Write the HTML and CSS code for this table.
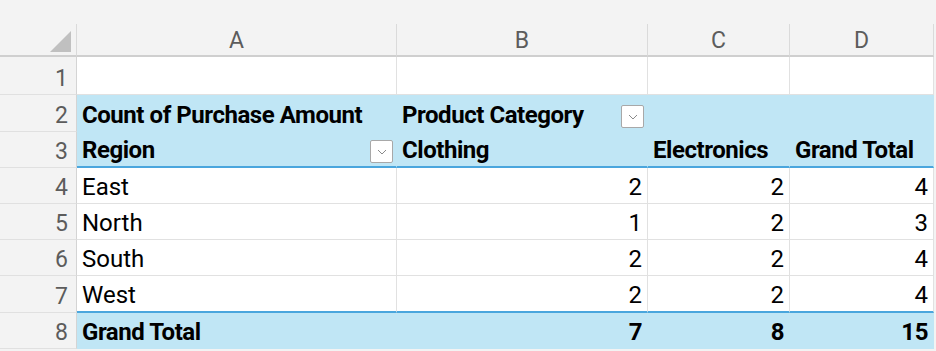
FILE: index.html
```html
<!DOCTYPE html>
<html>
<head>
<meta charset="utf-8">
<link rel="stylesheet" href="styles.css">
</head>
<body>
<div class="sheet">
  <div class="topstrip"></div>

  <div class="corner"><span class="tri"></span></div>
  <div class="colh">A</div>
  <div class="colh">B</div>
  <div class="colh">C</div>
  <div class="colh">D</div>

  <div class="rowh">1</div>
  <div class="cell"></div>
  <div class="cell"></div>
  <div class="cell"></div>
  <div class="cell"></div>

  <div class="rowh">2</div>
  <div class="cell pv b">Count of Purchase Amount</div>
  <div class="cell pv b">Product Category<span class="dd"><svg viewBox="0 0 10 6" width="10" height="6"><path d="M1 1 L5 5 L9 1" fill="none" stroke="#8a8a8a" stroke-width="1"/></svg></span></div>
  <div class="cell pv"></div>
  <div class="cell pv"></div>

  <div class="rowh">3</div>
  <div class="cell pv b hl">Region<span class="dd"><svg viewBox="0 0 10 6" width="10" height="6"><path d="M1 1 L5 5 L9 1" fill="none" stroke="#8a8a8a" stroke-width="1"/></svg></span></div>
  <div class="cell pv b hl">Clothing</div>
  <div class="cell pv b hl">Electronics</div>
  <div class="cell pv b hl">Grand Total</div>

  <div class="rowh">4</div>
  <div class="cell">East</div>
  <div class="cell num">2</div>
  <div class="cell num">2</div>
  <div class="cell num">4</div>

  <div class="rowh">5</div>
  <div class="cell">North</div>
  <div class="cell num">1</div>
  <div class="cell num">2</div>
  <div class="cell num">3</div>

  <div class="rowh">6</div>
  <div class="cell">South</div>
  <div class="cell num">2</div>
  <div class="cell num">2</div>
  <div class="cell num">4</div>

  <div class="rowh">7</div>
  <div class="cell hl">West</div>
  <div class="cell num hl">2</div>
  <div class="cell num hl">2</div>
  <div class="cell num hl">4</div>

  <div class="rowh">8</div>
  <div class="cell pv b">Grand Total</div>
  <div class="cell pv b num">7</div>
  <div class="cell pv b num">8</div>
  <div class="cell pv b num">15</div>
</div>
</body>
</html>
```

FILE: styles.css
```css
html, body {
  margin: 0;
  padding: 0;
  background: #ffffff;
}
.sheet {
  width: 936px;
  height: 351px;
  overflow: hidden;
  display: grid;
  grid-template-columns: 77px 320px 251px 142px 144px 2px;
  grid-template-rows: 24px 33px 38px 37px 36px 36px 36px 36px 37px 36px 1fr;
  background: #f3f3f3;
  font-family: Roboto, "Liberation Sans", sans-serif;
  font-size: 24px;
  color: #000;
}
.topstrip {
  grid-column: 1 / -1;
  background: #f3f3f3;
}
.corner, .colh {
  background: #f3f3f3;
  border-right: 1px solid #dadada;
  border-bottom: 2px solid #cfcfcf;
  box-sizing: border-box;
  position: relative;
}
.colh {
  display: flex;
  align-items: center;
  justify-content: center;
  color: #5c5c5c;
  font-size: 23px;
  padding-top: 2px;
}
.tri {
  position: absolute;
  right: 5px;
  bottom: 3px;
  width: 0;
  height: 0;
  border-left: 21px solid transparent;
  border-bottom: 21px solid #c0c0c0;
}
.rowh {
  grid-column: 1;
  background: #f3f3f3;
  border-right: 1px solid #d4d4d4;
  border-bottom: 1px solid #e0e0e0;
  box-sizing: border-box;
  display: flex;
  align-items: flex-end;
  justify-content: flex-end;
  padding: 0 8px 2px 0;
  font-size: 23px;
  color: #5c5c5c;
}
.cell {
  background: #ffffff;
  border-right: 1px solid #e1e1e1;
  border-bottom: 1px solid #e1e1e1;
  box-sizing: border-box;
  display: flex;
  align-items: flex-end;
  padding: 0 5px 2px 5px;
  white-space: nowrap;
  position: relative;
}
.num { justify-content: flex-end; }
.pv {
  background: #c0e6f5;
  border-right-color: #c0e6f5;
  border-bottom-color: #c0e6f5;
}
.b {
  font-weight: 700;
  letter-spacing: -0.45px;
}
.hl { border-bottom: 2px solid #4aa6dd; }
.dd {
  position: absolute;
  right: 3px;
  bottom: 3px;
  width: 23px;
  height: 23px;
  box-sizing: border-box;
  background: #ffffff;
  border: 1px solid #a8a8a8;
  border-radius: 2px;
  display: flex;
  align-items: center;
  justify-content: center;
}
```
